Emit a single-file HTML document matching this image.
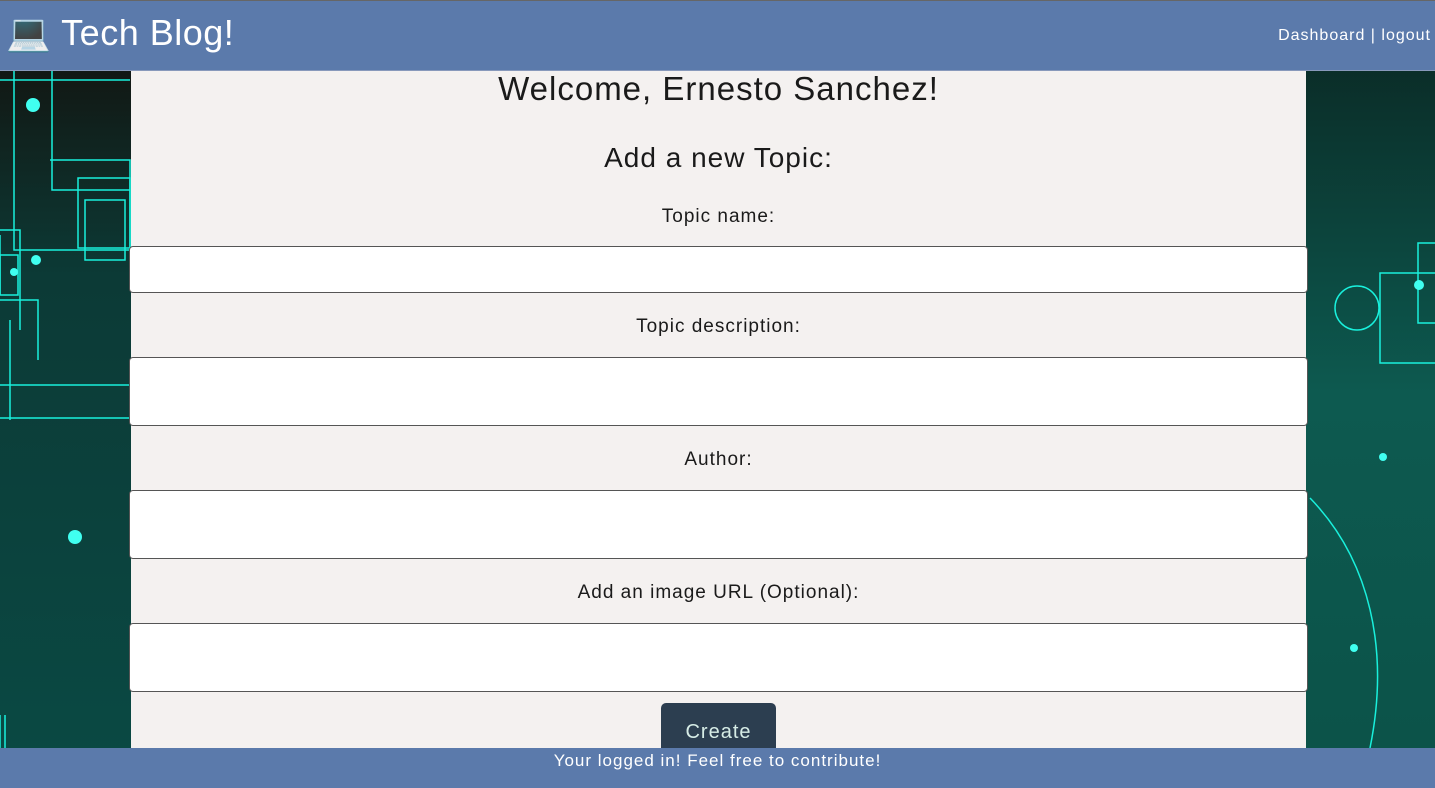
<!DOCTYPE html>
<html><head><meta charset="utf-8"><style>
*{box-sizing:border-box;margin:0;padding:0}
body{width:1435px;height:788px;overflow:hidden;position:relative;font-family:"Liberation Sans",sans-serif;background:#0b3a36}
.bg{position:absolute;left:0;top:0;width:1435px;height:788px}
.hdr{position:absolute;left:0;top:0;width:1435px;height:71px;background:#5b7aab;border-top:1px solid #666;border-bottom:1px solid #8899bb}
.logo{position:absolute;left:6px;top:11px;color:#fff;font-size:36px;letter-spacing:.5px}
.nav{position:absolute;right:4px;top:26px;color:#fff;font-size:16px;letter-spacing:1px}
.panel{position:absolute;left:131px;top:71px;width:1175px;height:677px;background:#f4f1f0}
.t{position:absolute;left:131px;width:1175px;text-align:center;color:#1a1a1a;letter-spacing:1px}
.in{position:absolute;left:129px;width:1179px;background:#fff;border:1px solid #555;border-radius:4px}
.btn{position:absolute;left:661px;top:703px;width:115px;height:60px;background:#2c3e50;border-radius:5px;color:#d6ece6;font-size:20px;text-align:center;padding-top:18px;letter-spacing:1px}
.ftr{position:absolute;left:0;top:748px;width:1435px;height:40px;background:#5b7aab;color:#fff;font-size:17px;text-align:center;padding-top:3px;letter-spacing:1px}
</style></head><body>
<svg class="bg" viewBox="0 0 1435 788">
<defs><linearGradient id="g" x1="0" y1="0" x2="0" y2="1"><stop offset="0" stop-color="#140c08"/><stop offset=".35" stop-color="#0c3a36"/><stop offset="1" stop-color="#0a4a44"/></linearGradient>
<linearGradient id="g2" x1="0" y1="0" x2="0" y2="1"><stop offset="0" stop-color="#0a2420"/><stop offset=".5" stop-color="#0d5a50"/><stop offset="1" stop-color="#0c5248"/></linearGradient></defs>
<rect width="140" height="788" fill="url(#g)"/>
<rect x="1300" width="135" height="788" fill="url(#g2)"/>
<g fill="none" stroke="#19f0dc" stroke-width="1.5">
<path d="M0 80H130M14 68V250H130M52 68V190H130M50 160H130V250M0 235V295M0 230H20V330M0 300H38V360M10 320V420M0 385H130M0 418H130"/>
<rect x="78" y="178" width="52" height="70"/><rect x="85" y="200" width="40" height="60"/><rect x="0" y="255" width="18" height="40"/>
<path d="M0 715V748M5 715V748"/>
<rect x="1380" y="273" width="60" height="90"/><rect x="1418" y="243" width="20" height="80"/>
<circle cx="1357" cy="308" r="22"/><path d="M1310 498C1370 560 1390 650 1370 748"/>
</g>
<g fill="#40fff0"><circle cx="33" cy="105" r="7"/><circle cx="75" cy="537" r="7"/><circle cx="1419" cy="285" r="5"/><circle cx="1383" cy="457" r="4"/><circle cx="1354" cy="648" r="4"/><circle cx="14" cy="272" r="4"/><circle cx="36" cy="260" r="5"/></g>
</svg>
<div class="hdr"><div class="logo">💻 Tech Blog!</div><div class="nav">Dashboard | logout</div></div>
<div class="panel"></div>
<div class="t" style="top:70px;font-size:33px">Welcome, Ernesto Sanchez!</div>
<div class="t" style="top:142px;font-size:28px">Add a new Topic:</div>
<div class="t" style="top:206px;font-size:19px">Topic name:</div>
<div class="in" style="top:246px;height:47px"></div>
<div class="t" style="top:316px;font-size:19px">Topic description:</div>
<div class="in" style="top:357px;height:69px"></div>
<div class="t" style="top:449px;font-size:19px">Author:</div>
<div class="in" style="top:490px;height:69px"></div>
<div class="t" style="top:582px;font-size:19px">Add an image URL (Optional):</div>
<div class="in" style="top:623px;height:69px"></div>
<div class="btn">Create</div>
<div class="ftr">Your logged in! Feel free to contribute!</div>
</body></html>
